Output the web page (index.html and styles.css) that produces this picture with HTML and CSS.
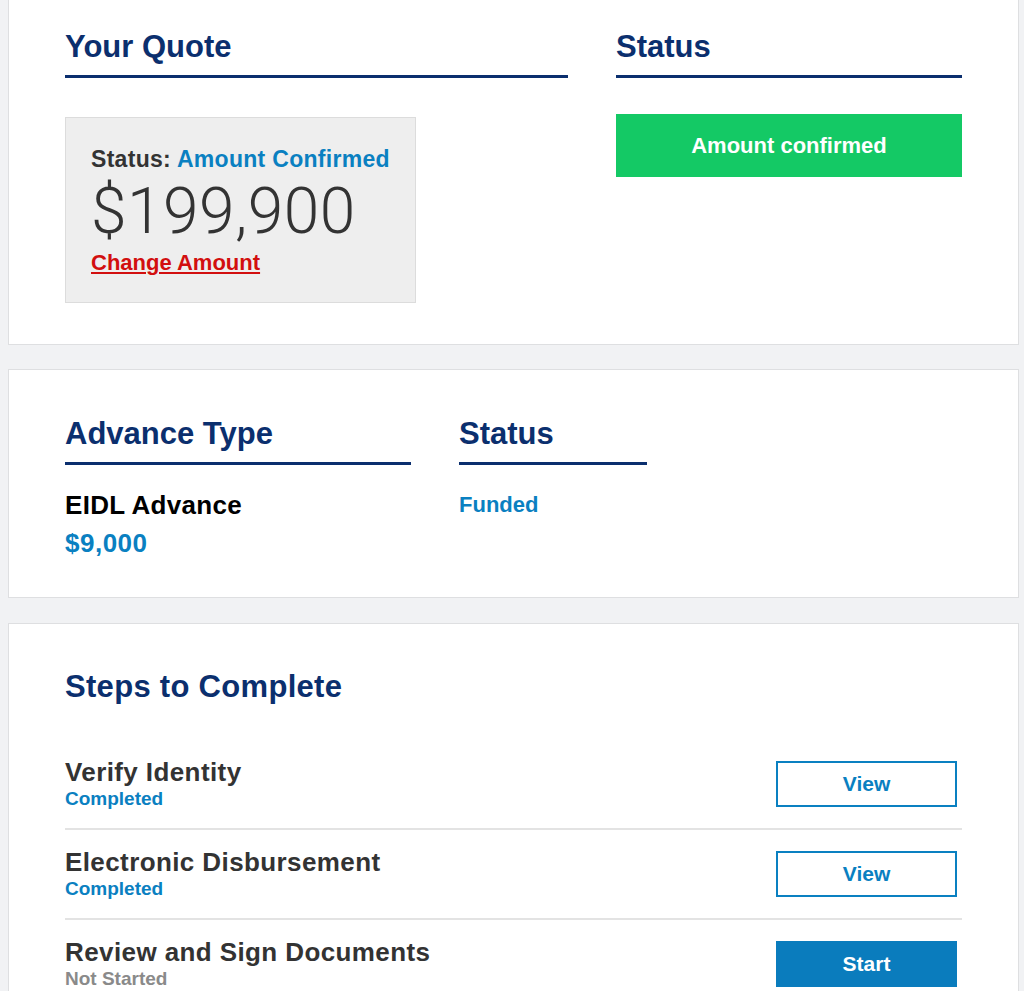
FILE: index.html
```html
<!DOCTYPE html>
<html lang="en">
  <head>
    <meta charset="UTF-8">
    <meta name="viewport" content="width=device-width, initial-scale=1.0">
    <title>Your Quote</title>
    <link rel="stylesheet" href="styles.css">
  </head>
  <body>
    <div class="page">

      <!-- quote + status -->
      <section class="card quote-card">
        <div class="quote-grid">
          <div class="col">
            <h2 class="section-title underlined">Your Quote</h2>
            <div class="quote-box">
              <p class="quote-status">Status: <span class="text-blue">Amount Confirmed</span></p>
              <p class="quote-amount">$199,900</p>
              <a class="change-link" href="#">Change Amount</a>
            </div>
          </div>
          <div class="col">
            <h2 class="section-title underlined">Status</h2>
            <div class="status-badge">Amount confirmed</div>
          </div>
        </div>
      </section>

      <!-- advance -->
      <section class="card advance-card">
        <div class="advance-grid">
          <div class="col">
            <h2 class="section-title underlined">Advance Type</h2>
            <p class="advance-name">EIDL Advance</p>
            <p class="advance-amount text-blue">$9,000</p>
          </div>
          <div class="col">
            <h2 class="section-title underlined">Status</h2>
            <p class="advance-status text-blue">Funded</p>
          </div>
        </div>
      </section>

      <!-- steps -->
      <section class="card steps-card">
        <h2 class="section-title steps-title">Steps to Complete</h2>
        <ul class="step-list">
          <li class="step">
            <div class="step-info">
              <span class="step-name">Verify Identity</span>
              <span class="step-state text-blue">Completed</span>
            </div>
            <button class="step-btn" type="button">View</button>
          </li>
          <li class="step">
            <div class="step-info">
              <span class="step-name">Electronic Disbursement</span>
              <span class="step-state text-blue">Completed</span>
            </div>
            <button class="step-btn" type="button">View</button>
          </li>
          <li class="step">
            <div class="step-info">
              <span class="step-name">Review and Sign Documents</span>
              <span class="step-state text-grey">Not Started</span>
            </div>
            <button class="step-btn step-btn-primary" type="button">Start</button>
          </li>
        </ul>
      </section>

    </div>
  </body>
</html>
```

FILE: styles.css
```css
html, body {
  overflow: hidden;
}
body {
  margin: 0;
  background-color: #f1f2f4;
  font-family: "Liberation Sans", Arial, Helvetica, sans-serif;
  color: #333;
}
p {
  margin: 0;
}

/* page is scrolled a little, the first card starts above the fold */
.page {
  margin-top: -18px;
  padding: 0 5px 0 8px;
}

.card {
  background-color: #fff;
  border: 1px solid #dedfe1;
  padding: 45px 56px 40px 56px;
  margin-bottom: 24px;
}

.section-title {
  margin: 0;
  font-size: 31px;
  line-height: 37px;
  font-weight: bold;
  color: #0b2f6e;
}
.underlined {
  padding-bottom: 10px;
  border-bottom: 3px solid #0b2f6e;
}

.text-blue {
  color: #0a80c1;
}
.text-grey {
  color: #8a8a8a;
}

/* quote card */
.quote-card {
  padding-bottom: 41px;
}
.quote-grid {
  display: grid;
  grid-template-columns: 503px 346px;
  column-gap: 48px;
}
.quote-box {
  box-sizing: border-box;
  width: 351px;
  margin-top: 39px;
  padding: 27px 25px 25px 25px;
  background-color: #eee;
  border: 1px solid #dcdcdc;
}
.quote-status {
  font-size: 23px;
  line-height: 28px;
  letter-spacing: 0.3px;
  font-weight: bold;
  margin-bottom: 6px;
}
.quote-amount {
  font-family: Roboto, "Liberation Sans", sans-serif;
  font-weight: 300;
  font-size: 64px;
  line-height: 66px;
  letter-spacing: 0.5px;
  color: #333;
  margin-bottom: 4px;
}
.change-link {
  display: block;
  font-size: 22px;
  line-height: 28px;
  font-weight: bold;
  color: #d20f0f;
  text-decoration-thickness: 2px;
  text-underline-offset: 2px;
}
.status-badge {
  margin-top: 36px;
  height: 63px;
  display: flex;
  align-items: center;
  justify-content: center;
  background-color: #14c965;
  color: #fff;
  font-size: 22px;
  font-weight: bold;
}

/* advance card */
.advance-card {
  padding-bottom: 35px;
  margin-bottom: 25px;
}
.advance-grid {
  display: grid;
  grid-template-columns: 346px 188px;
  column-gap: 48px;
}
.advance-name {
  margin-top: 21px;
  font-size: 26px;
  line-height: 38px;
  letter-spacing: 0.3px;
  font-weight: bold;
  color: #000;
}
.advance-amount {
  font-size: 26px;
  line-height: 38px;
  letter-spacing: 0.5px;
  font-weight: bold;
}
.advance-status {
  margin-top: 21px;
  font-size: 22px;
  line-height: 38px;
  font-weight: bold;
}

/* steps card */
.steps-card {
  padding-top: 44px;
}
.steps-title {
  margin-bottom: 35px;
  letter-spacing: 0.3px;
}
.step-list {
  list-style: none;
  margin: 0;
  padding: 0;
}
.step {
  display: flex;
  align-items: center;
  justify-content: space-between;
  height: 88px;
  border-bottom: 2px solid #e3e3e3;
}
.step-info {
  display: flex;
  flex-direction: column;
}
.step-name {
  font-size: 26px;
  line-height: 26px;
  letter-spacing: 0.4px;
  font-weight: bold;
  color: #333;
  margin-bottom: 3px;
}
.step-state {
  font-size: 19px;
  line-height: 22px;
  font-weight: bold;
}
.step-btn {
  width: 181px;
  height: 46px;
  margin-right: 5px;
  background-color: #fff;
  border: 2px solid #0a80c1;
  color: #0a80c1;
  font-family: "Liberation Sans", Arial, Helvetica, sans-serif;
  font-size: 21px;
  font-weight: bold;
  cursor: pointer;
}
.step-btn-primary {
  background-color: #0a7cbd;
  border-color: #0a7cbd;
  color: #fff;
}
```
